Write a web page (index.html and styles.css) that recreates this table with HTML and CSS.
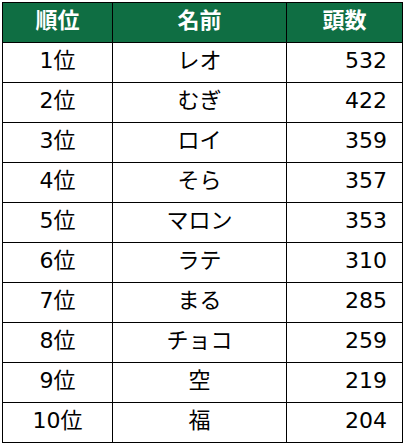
FILE: index.html
```html
<!DOCTYPE html>
<html lang="ja">
<head>
<meta charset="utf-8">
<link rel="stylesheet" href="styles.css">
</head>
<body>
<table class="rank">
  <thead>
    <tr><th>順位</th><th>名前</th><th>頭数</th></tr>
  </thead>
  <tbody>
    <tr><td class="pos">1位</td><td class="name">レオ</td><td class="num">532</td></tr>
    <tr><td class="pos">2位</td><td class="name">むぎ</td><td class="num">422</td></tr>
    <tr><td class="pos">3位</td><td class="name">ロイ</td><td class="num">359</td></tr>
    <tr><td class="pos">4位</td><td class="name">そら</td><td class="num">357</td></tr>
    <tr><td class="pos">5位</td><td class="name">マロン</td><td class="num">353</td></tr>
    <tr><td class="pos">6位</td><td class="name">ラテ</td><td class="num">310</td></tr>
    <tr><td class="pos">7位</td><td class="name">まる</td><td class="num">285</td></tr>
    <tr><td class="pos">8位</td><td class="name">チョコ</td><td class="num">259</td></tr>
    <tr><td class="pos">9位</td><td class="name">空</td><td class="num">219</td></tr>
    <tr><td class="pos">10位</td><td class="name">福</td><td class="num">204</td></tr>
  </tbody>
</table>
</body>
</html>
```
FILE: styles.css
```css
html, body {
  margin: 0;
  padding: 0;
  background: #ffffff;
}
body {
  padding: 2px 0 0 2px;
  font-family: "DejaVu Sans", "Noto Sans CJK JP", sans-serif;
}
.rank {
  border-collapse: collapse;
  table-layout: fixed;
  width: 401px;
  font-size: 22px;
  color: #000;
}
.rank th, .rank td {
  border: 1px solid #000;
  height: 35px;
  padding: 0 0 4px 0;
  line-height: 1;
  vertical-align: middle;
}
.rank th:nth-child(1) { width: 109px; }
.rank th:nth-child(2) { width: 173px; }
.rank th:nth-child(3) { width: 115px; }
.rank th {
  background: #0f6e43;
  color: #ffffff;
  font-weight: bold;
  text-align: center;
}
.rank .pos, .rank .name {
  text-align: center;
}
.rank .num {
  text-align: right;
  padding-right: 15px;
}
```
